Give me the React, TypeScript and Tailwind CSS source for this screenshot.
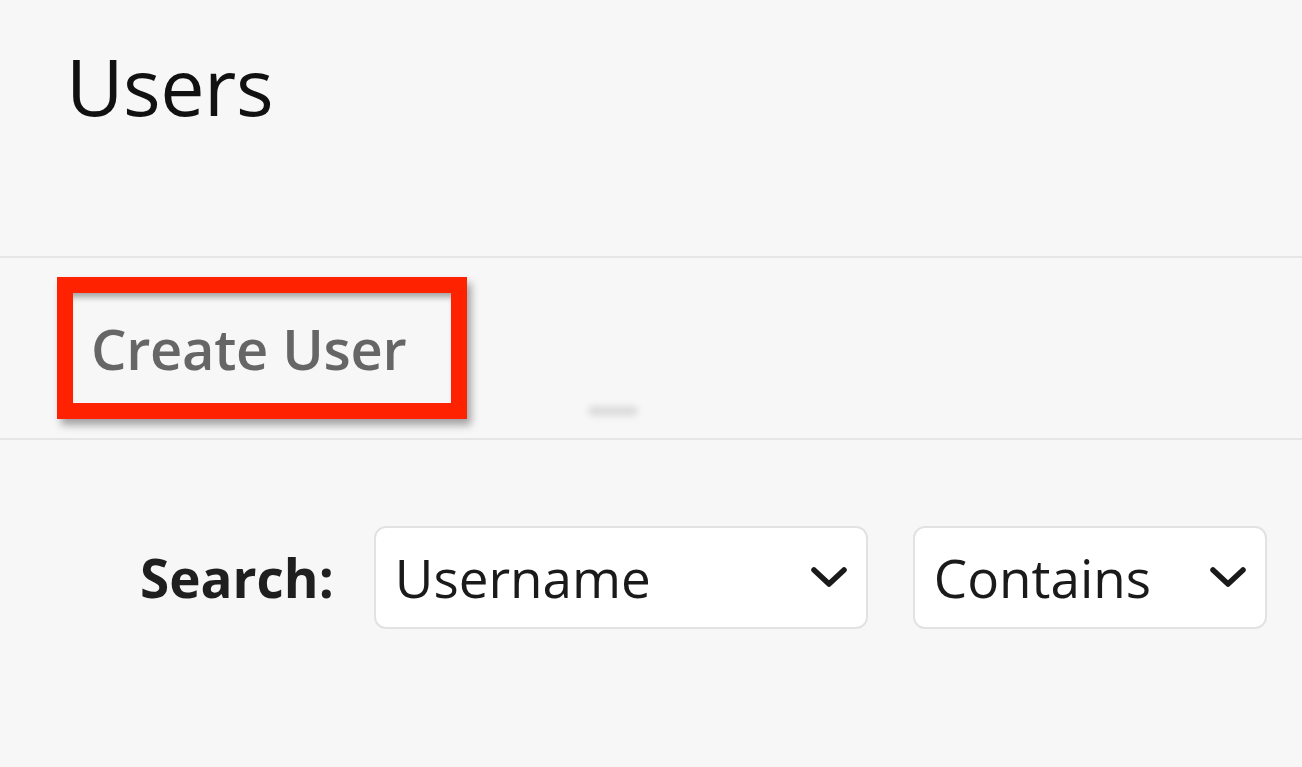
function Chevron() {
  return (
    <svg width="38" height="26" viewBox="0 0 38 26" fill="none">
      <path d="M4 5 L19 19 L34 5" stroke="#1a1a1a" strokeWidth="5.5" strokeLinecap="round" strokeLinejoin="round" />
    </svg>
  );
}

function Select({ value, width }: { value: string; width: string }) {
  return (
    <div className={`${width} h-[103px] flex items-center justify-between bg-white border-2 border-[#e2e2e2] rounded-[12px] pl-[19px] pr-[18px]`}>
      <span className="text-[53px] text-[#1a1a1a] leading-none">{value}</span>
      <Chevron />
    </div>
  );
}

export default function App() {
  return (
    <div className="w-[1302px] h-[767px] overflow-hidden bg-[#f7f7f7]" style={{ fontFamily: '"Open Sans", "Noto Sans", sans-serif' }}>
      <div className="h-[258px] border-b-2 border-[#e6e6e6] pl-[66px] pt-[46px]">
        <h1 className="text-[79px] leading-none text-[#111] tracking-[-0.5px]">Users</h1>
      </div>
      <div className="h-[182px] border-b-2 border-[#e6e6e6] pl-[57px] pt-[19px] relative">
        <div className="w-[410px] h-[142px] border-[16px] border-[#ff2200] shadow-[4px_6px_8px_rgba(0,0,0,0.35)]">
          <div className="h-full flex items-center pl-[18px] shadow-[inset_0_8px_6px_-4px_rgba(0,0,0,0.35)]">
            <span className="text-[56px] font-semibold text-[#666] leading-none tracking-[-0.3px]">Create User</span>
          </div>
        </div>
        <div className="absolute left-[588px] top-[148px] w-[50px] h-[10px] rounded-full bg-[#dcdcdc] blur-[3px]" />
      </div>
      <div className="flex items-center pt-[86px] pl-[140px] gap-[40px]">
        <span className="text-[53px] font-bold text-[#1f1f1f] leading-none">Search:</span>
        <div className="flex gap-[45px]">
          <Select value="Username" width="w-[494px]" />
          <Select value="Contains" width="w-[354px]" />
        </div>
      </div>
    </div>
  );
}
